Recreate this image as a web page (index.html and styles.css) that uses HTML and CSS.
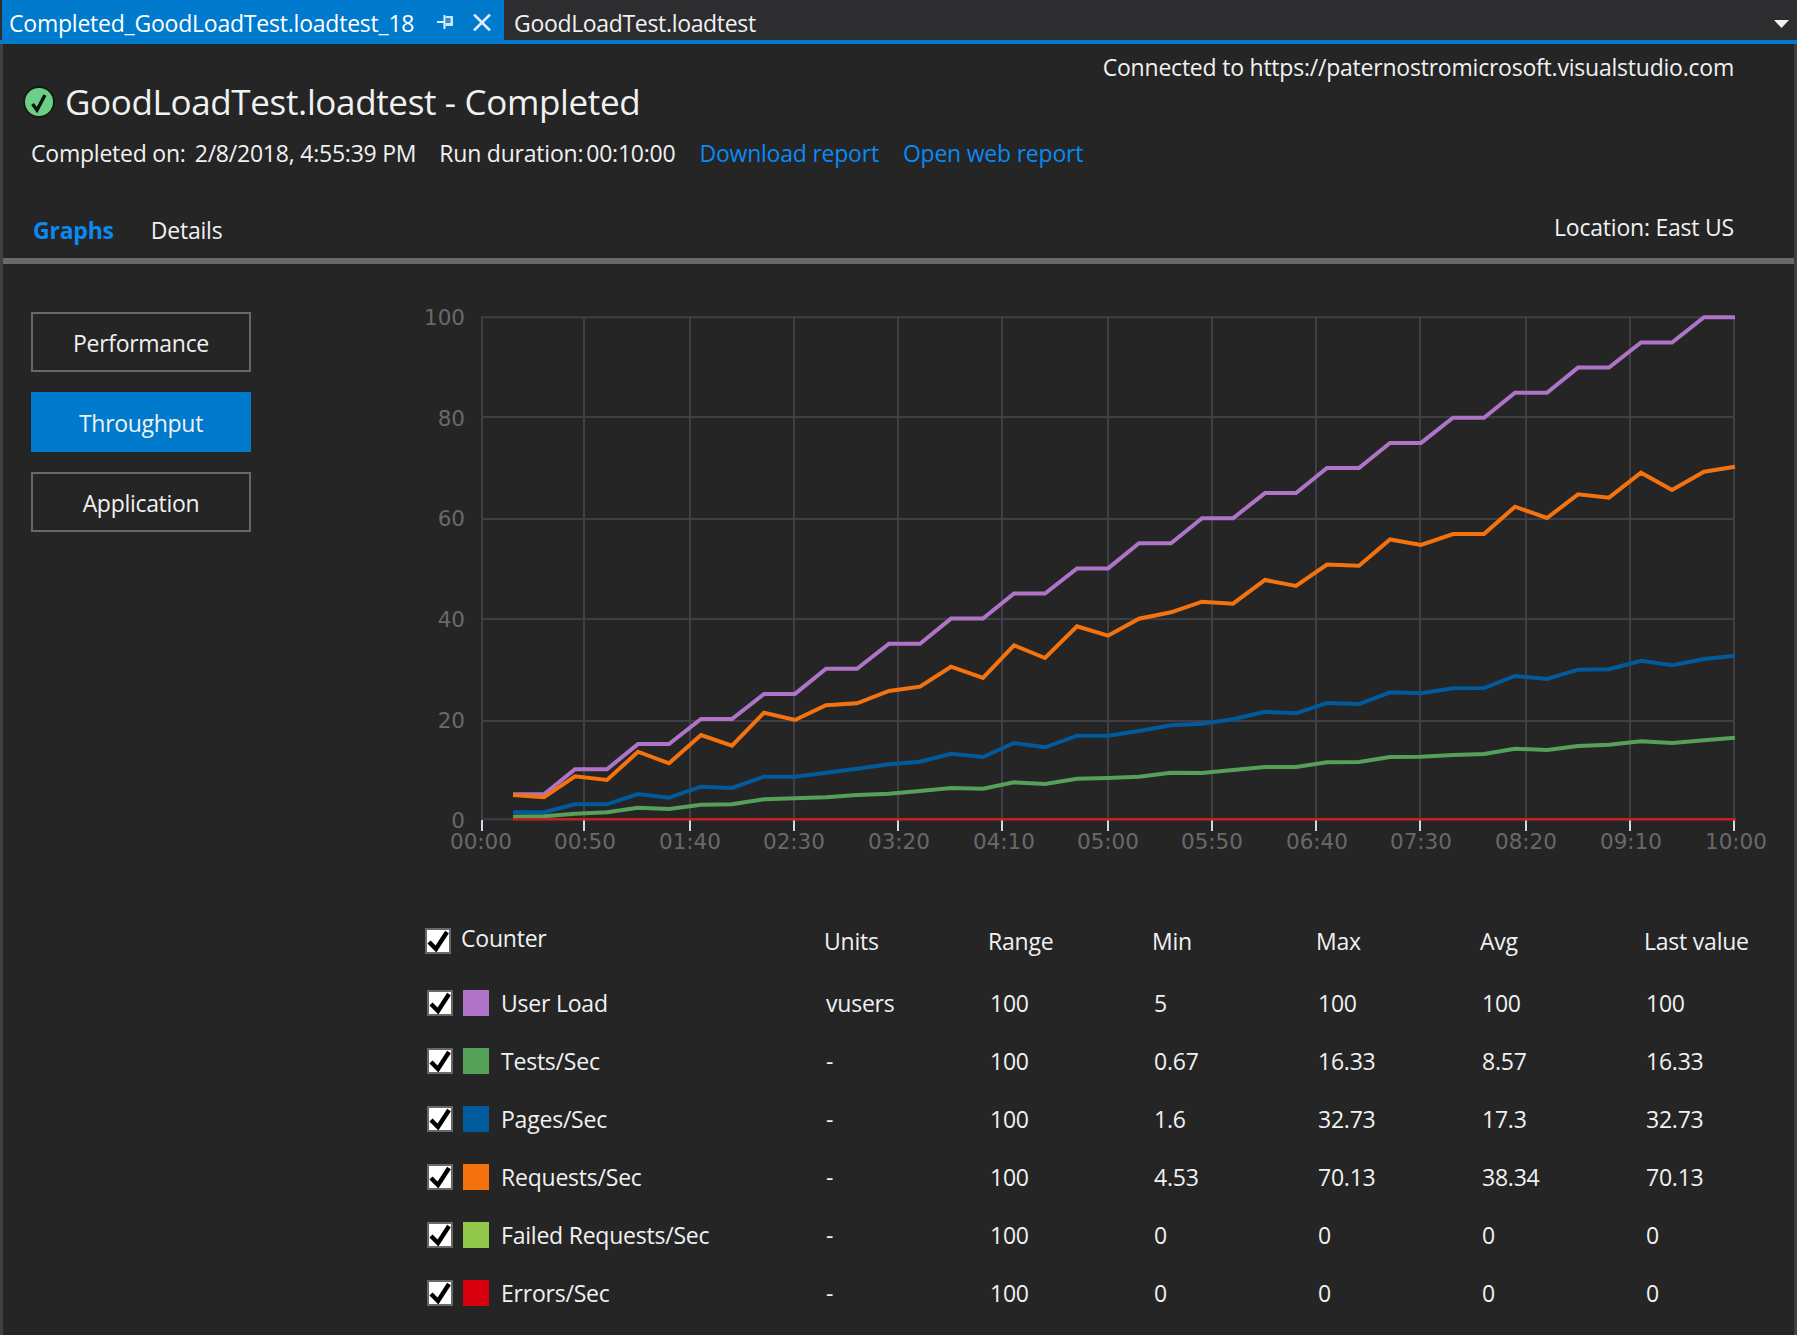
FILE: index.html
```html
<!DOCTYPE html>
<html lang="en">
<head>
<meta charset="utf-8">
<title>GoodLoadTest.loadtest - Completed</title>
<link rel="stylesheet" href="styles.css">
</head>
<body>
<div class="app">
  <header class="tabbar">
    <div class="tab tab-active">
      <span class="tab-name">Completed_GoodLoadTest.loadtest_18</span>
      <svg class="pin" viewBox="0 0 16 14" width="16" height="14"><path d="M0 7h7" fill="none" stroke="#e4f1fa" stroke-width="2"/><path d="M6.500 0h2v14h-2z" fill="#e4f1fa"/><path d="M8.500 1h7.500v10h-7.500z" fill="#cfe5f5"/><path d="M8.500 3h5v5h-5z" fill="#2b90d6"/></svg>
      <svg class="close" viewBox="0 0 18 17" width="18" height="17"><path d="M1 0.500 17 16.500M17 0.500 1 16.500" stroke="#dcecf8" stroke-width="2.600" fill="none"/></svg>
    </div>
    <div class="tab tab-plain"><span class="tab-name">GoodLoadTest.loadtest</span></div>
    <svg class="tab-menu" viewBox="0 0 15 8" width="15" height="8"><path d="M0 0h15L7.500 8z" fill="#f1f1f1"/></svg>
  </header>

  <div class="content">
    <section class="summary">
      <div class="summary-left">
        <h1 class="title">
          <svg class="status" viewBox="0 0 32 32" width="32" height="32"><circle cx="16" cy="16" r="16" fill="#101c14"/><circle cx="16" cy="16" r="14" fill="#6dce85"/><path d="M9.500 18 14 24 22 9" fill="none" stroke="#08130b" stroke-width="3.400"/></svg>
          <span>GoodLoadTest.loadtest - Completed</span>
        </h1>
        <p class="meta">
          <span class="meta-label">Completed on:</span><span class="meta-value meta-date">2/8/2018, 4:55:39 PM</span>
          <span class="meta-label meta-second">Run duration:</span><span class="meta-value">00:10:00</span>
          <a class="link link-first" href="#">Download report</a>
          <a class="link link-second" href="#">Open web report</a>
        </p>
      </div>
      <div class="connected">Connected to https://paternostromicrosoft.visualstudio.com</div>
    </section>

    <nav class="subnav">
      <a class="subtab subtab-active" href="#">Graphs</a>
      <a class="subtab" href="#">Details</a>
      <span class="location">Location: East US</span>
    </nav>

    <main class="panel">
      <aside class="views">
        <button class="view">Performance</button>
        <button class="view view-active">Throughput</button>
        <button class="view">Application</button>
      </aside>

      <div class="report">
        <svg class="chart" viewBox="0 0 1397 540" width="1397" height="540">
          <g class="grid">
            <path d="M61 11.300H1315M61 111H1315M61 213H1315M61 313H1315M61 415H1315M61 513.300H1315"/>
            <path d="M62 11V514M164 11V514M270 11V514M374 11V514M478 11V514M582 11V514M688 11V514M792 11V514M896 11V514M1000 11V514M1106 11V514M1210 11V514M1314 11V514"/>
          </g>
          <g class="ticks">
            <path d="M62 514V525M164 514V525M270 514V525M374 514V525M478 514V525M582 514V525M688 514V525M792 514V525M896 514V525M1000 514V525M1106 514V525M1210 514V525M1314 514V525"/>
          </g>
          <polyline class="series s-users" points="93,488.3 124,488.3 155,463.2 187,463.2 218,438.1 249,438.1 281,413 312,413 344,387.9 375,387.9 406,362.8 437,362.8 469,337.7 500,337.7 531,312.6 563,312.6 594,287.5 625,287.5 657,262.4 688,262.4 719,237.3 751,237.3 782,212.2 813,212.2 845,187.1 876,187.1 907,162 939,162 970,136.9 1001,136.9 1033,111.8 1064,111.8 1095,86.7 1127,86.7 1158,61.6 1189,61.6 1221,36.5 1252,36.5 1284,11.3 1315,11.3"/>
          <polyline class="series s-requests" points="93,489 124,491.3 155,470.3 187,474 218,445.7 249,457.3 281,429 312,439.7 344,406.7 375,414 406,399.3 437,397.3 469,385 500,380.7 531,360.7 563,372 594,339.3 625,352 657,320.3 688,329.7 719,312.7 751,306.3 782,295.7 813,297.7 845,274 876,280 907,258.5 939,259.7 970,233.5 1001,239 1033,228 1064,228 1095,200.7 1127,212 1158,188.3 1189,191.7 1221,166.7 1252,184 1284,165.7 1315,160.7"/>
          <polyline class="series s-pages" points="93,506.3 124,506.3 155,498.3 187,498.3 218,488 249,491.7 281,480.7 312,482 344,470.7 375,470.7 406,466.7 437,462.7 469,458.3 500,455.7 531,447.7 563,451 594,437 625,441.3 657,429.7 688,429.7 719,425 751,419.3 782,417.7 813,413.3 845,405.7 876,407.3 907,397 939,398 970,386.3 1001,387.3 1033,382.3 1064,382 1095,370 1127,373 1158,363.7 1189,363.3 1221,354.7 1252,359.3 1284,353 1315,349.7"/>
          <polyline class="series s-tests" points="93,510.7 124,510.3 155,507.7 187,506.3 218,501.7 249,503 281,498.7 312,498.3 344,493.3 375,492.3 406,491.3 437,489 469,487.7 500,485 531,482 563,482.7 594,476.3 625,478 657,472.7 688,472 719,470.7 751,466.7 782,467 813,464 845,461 876,461 907,456.3 939,456 970,451 1001,450.7 1033,449 1064,448 1095,442.7 1127,444 1158,440 1189,438.7 1221,435.3 1252,437 1284,434.3 1315,431.7"/>
          <path class="errors" d="M93 513.300H1316"/>
          <g class="y-labels">
            <text x="45" y="19">100</text>
            <text x="45" y="120">80</text>
            <text x="45" y="220">60</text>
            <text x="45" y="321">40</text>
            <text x="45" y="422">20</text>
            <text x="45" y="522">0</text>
          </g>
          <g class="x-labels">
            <text x="61" y="543">00:00</text>
            <text x="165" y="543">00:50</text>
            <text x="270" y="543">01:40</text>
            <text x="374" y="543">02:30</text>
            <text x="479" y="543">03:20</text>
            <text x="584" y="543">04:10</text>
            <text x="688" y="543">05:00</text>
            <text x="792" y="543">05:50</text>
            <text x="897" y="543">06:40</text>
            <text x="1001" y="543">07:30</text>
            <text x="1106" y="543">08:20</text>
            <text x="1211" y="543">09:10</text>
            <text x="1316" y="543">10:00</text>
          </g>
        </svg>

        <div class="counters">
          <div class="row row-head">
            <div class="cell-name">
              <span class="check"><svg viewBox="0 0 22 22" width="22" height="22"><path d="M2 12 9 19 20 2" fill="none" stroke="#000" stroke-width="4.400"/></svg></span>
              <span class="head-counter">Counter</span>
            </div>
            <span>Units</span><span>Range</span><span>Min</span><span>Max</span><span>Avg</span><span>Last value</span>
          </div>

          <div class="row">
            <div class="cell-name">
              <span class="check"><svg viewBox="0 0 22 22" width="22" height="22"><path d="M2 12 9 19 20 2" fill="none" stroke="#000" stroke-width="4.400"/></svg></span>
              <span class="swatch sw-users"></span><span>User Load</span>
            </div>
            <span>vusers</span><span>100</span><span>5</span><span>100</span><span>100</span><span>100</span>
          </div>
          <div class="row">
            <div class="cell-name">
              <span class="check"><svg viewBox="0 0 22 22" width="22" height="22"><path d="M2 12 9 19 20 2" fill="none" stroke="#000" stroke-width="4.400"/></svg></span>
              <span class="swatch sw-tests"></span><span>Tests/Sec</span>
            </div>
            <span>-</span><span>100</span><span>0.67</span><span>16.33</span><span>8.57</span><span>16.33</span>
          </div>
          <div class="row">
            <div class="cell-name">
              <span class="check"><svg viewBox="0 0 22 22" width="22" height="22"><path d="M2 12 9 19 20 2" fill="none" stroke="#000" stroke-width="4.400"/></svg></span>
              <span class="swatch sw-pages"></span><span>Pages/Sec</span>
            </div>
            <span>-</span><span>100</span><span>1.6</span><span>32.73</span><span>17.3</span><span>32.73</span>
          </div>
          <div class="row">
            <div class="cell-name">
              <span class="check"><svg viewBox="0 0 22 22" width="22" height="22"><path d="M2 12 9 19 20 2" fill="none" stroke="#000" stroke-width="4.400"/></svg></span>
              <span class="swatch sw-requests"></span><span>Requests/Sec</span>
            </div>
            <span>-</span><span>100</span><span>4.53</span><span>70.13</span><span>38.34</span><span>70.13</span>
          </div>
          <div class="row">
            <div class="cell-name">
              <span class="check"><svg viewBox="0 0 22 22" width="22" height="22"><path d="M2 12 9 19 20 2" fill="none" stroke="#000" stroke-width="4.400"/></svg></span>
              <span class="swatch sw-failed"></span><span>Failed Requests/Sec</span>
            </div>
            <span>-</span><span>100</span><span>0</span><span>0</span><span>0</span><span>0</span>
          </div>
          <div class="row">
            <div class="cell-name">
              <span class="check"><svg viewBox="0 0 22 22" width="22" height="22"><path d="M2 12 9 19 20 2" fill="none" stroke="#000" stroke-width="4.400"/></svg></span>
              <span class="swatch sw-errors"></span><span>Errors/Sec</span>
            </div>
            <span>-</span><span>100</span><span>0</span><span>0</span><span>0</span><span>0</span>
          </div>
        </div>
      </div>
    </main>
  </div>
</div>
</body>
</html>
```

FILE: styles.css
```css
* { box-sizing: border-box; }

html, body {
  margin: 0;
  height: 100%;
  background: #252526;
}

body {
  font-family: "Open Sans", "Noto Sans", sans-serif;
  font-size: 23px;
  letter-spacing: -0.22px;
  color: #f1f1f1;
  overflow: hidden;
}

.app {
  width: 1797px;
  height: 1335px;
  display: flex;
  flex-direction: column;
}

/* document tabs */
.tabbar {
  height: 44px;
  flex: none;
  display: flex;
  align-items: flex-start;
  background: #2d2d30;
  border-bottom: 4px solid #007acc;
  padding-left: 2px;
}

.tab {
  height: 40px;
  display: flex;
  align-items: center;
  white-space: nowrap;
}

.tab-name { padding-top: 2px; }

.tab-active {
  width: 502px;
  height: 44px;
  padding: 4px 0 4px 7px;
  background: #007acc;
  color: #fff;
}

.tab-active .tab-name { width: 428px; }

.close { margin-left: 20px; }

.tab-plain {
  padding: 4px 0 0 10px;
  letter-spacing: -0.33px;
  color: #f1f1f1;
}

.tab-menu {
  margin: 20px 8px 0 auto;
}

/* content */
.content {
  flex: 1;
  display: flex;
  flex-direction: column;
  border-left: 3px solid #3f3f46;
  border-right: 3px solid #3f3f46;
}

.summary {
  height: 160px;
  flex: none;
  display: flex;
  justify-content: space-between;
  padding: 0 60px 0 20px;
}

.title {
  display: flex;
  align-items: center;
  margin: 34px 0 0;
  font-size: 35px;
  font-weight: 400;
  line-height: 48px;
  letter-spacing: -0.35px;
  color: #f1f1f1;
}

.status { margin-right: 10px; }

.meta {
  display: flex;
  margin: 11px 0 0 8px;
  line-height: 32px;
  white-space: nowrap;
}

.meta-value { margin-left: 3px; }
.meta-date { margin-left: 9px; }
.meta-second { margin-left: 23px; }
.link { color: #0a8af2; text-decoration: none; }
.link-first { margin-left: 24px; }
.link-second { margin-left: 24px; }

.connected {
  padding-top: 7px;
  line-height: 32px;
  white-space: nowrap;
}

.subnav {
  height: 60px;
  flex: none;
  display: flex;
  align-items: flex-start;
  padding: 10px 60px 0 30px;
  border-bottom: 6px solid #686868;
}

.subtab {
  line-height: 32px;
  color: #f1f1f1;
  text-decoration: none;
  margin-right: 37px;
}

.subtab-active {
  color: #0a8af2;
  font-weight: 700;
}

.location {
  margin-left: auto;
  margin-top: -3px;
  line-height: 32px;
}

/* body panel */
.panel {
  flex: 1;
  display: flex;
  padding-top: 48px;
}

.views {
  width: 417px;
  flex: none;
  display: flex;
  flex-direction: column;
  gap: 20px;
  padding-left: 28px;
}

.view {
  width: 220px;
  height: 60px;
  font: inherit;
  letter-spacing: -0.3px;
  color: #f1f1f1;
  background: transparent;
  border: 2px solid #686868;
  padding: 2px 0 0;
}

.view-active {
  background: #007acc;
  border-color: #007acc;
}

.report {
  flex: 1;
  margin-top: -6px;
  min-width: 0;
}

/* chart */
.chart {
  display: block;
  overflow: visible;
}

.grid path {
  fill: none;
  stroke: #3f3e46;
  stroke-width: 2;
}

.ticks path {
  fill: none;
  stroke: #cfd8e6;
  stroke-width: 2;
}

.series {
  fill: none;
  stroke-width: 4;
  stroke-linejoin: miter;
}

.s-users { stroke: #af74c7; }
.s-requests { stroke: #f5730f; }
.s-pages { stroke: #005a9c; }
.s-tests { stroke: #56a15a; }

.errors {
  fill: none;
  stroke: #c7201c;
  stroke-width: 2.5;
}

.y-labels text,
.x-labels text {
  font-family: "DejaVu Sans", sans-serif;
  font-size: 21.5px;
  letter-spacing: 0;
  fill: #696969;
}

.y-labels text { text-anchor: end; }
.x-labels text { text-anchor: middle; }

/* counter table */
.counters {
  margin-top: 68px;
  padding-left: 7px;
}

.row {
  display: grid;
  grid-template-columns: 399px 164px 164px 164px 164px 164px auto;
  align-items: center;
  height: 58px;
  white-space: nowrap;
}

.row-head {
  height: 54px;
  margin-left: -2px;
  margin-bottom: 6px;
}

.cell-name {
  display: flex;
  align-items: center;
}

.check {
  width: 26px;
  height: 26px;
  flex: none;
  display: flex;
  align-items: center;
  justify-content: center;
  background: #fff;
  border: 2px solid #686868;
}

.swatch {
  width: 26px;
  height: 26px;
  flex: none;
  margin: 0 12px 0 10px;
}

.head-counter {
  margin-left: 10px;
  transform: translateY(-3px);
}

.sw-users { background: #af74c7; }
.sw-tests { background: #56a15a; }
.sw-pages { background: #005a9c; }
.sw-requests { background: #f5730f; }
.sw-failed { background: #92c84b; }
.sw-errors { background: #d9000f; }
```
